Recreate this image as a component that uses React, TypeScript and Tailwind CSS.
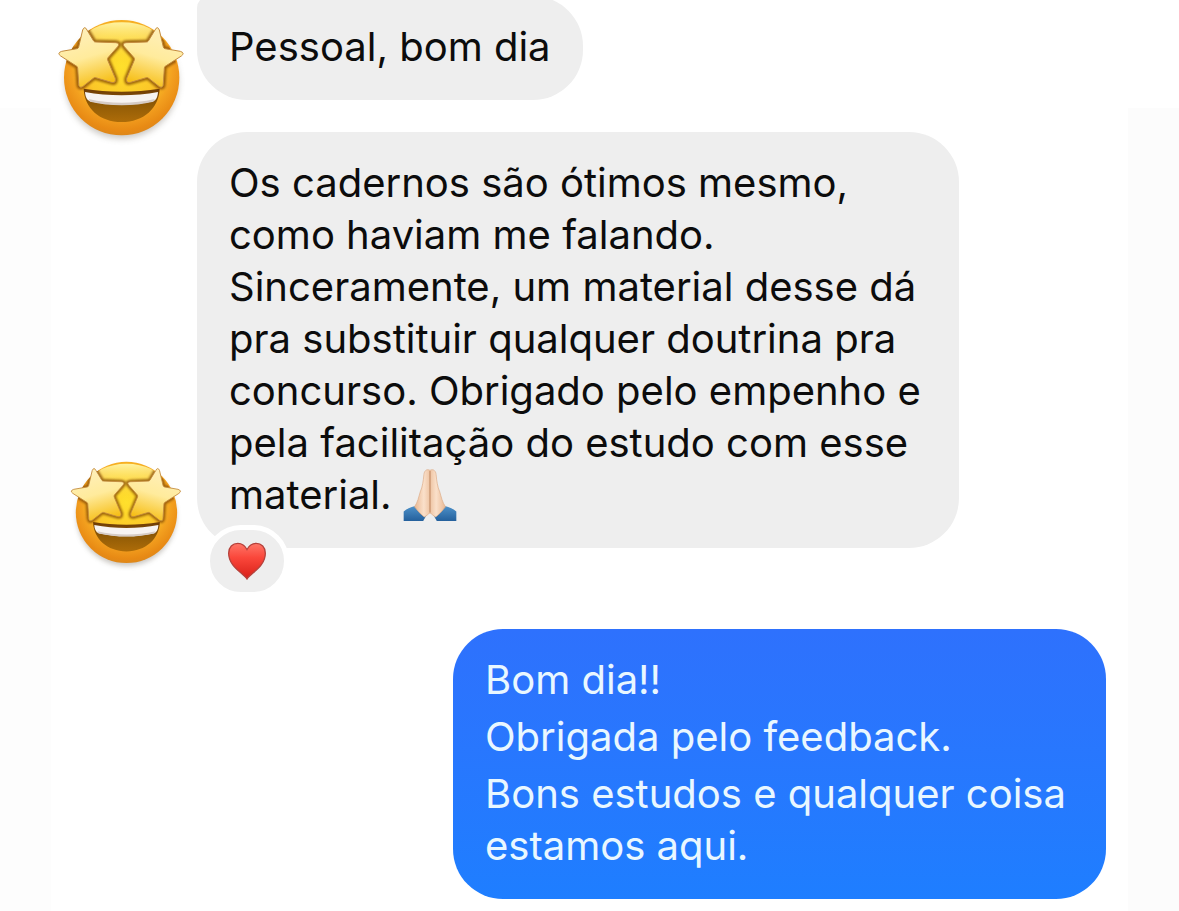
import type { ReactNode } from "react"
import { clsx } from "clsx"

const STAR =
  "M113 60 Q119 46 126 60 L146 93 Q148 96 152 96 L212 98 Q227 99 218 110 L189 143 Q187 146 188 150 L211 205 Q214 221 199 217 L152 203 Q148 202 145 205 L113 230 Q101 236 101 221 L98 174 Q98 170 94 168 L47 138 Q35 129 50 124 L96 116 Q100 115 101 111 Z"

function StarFace({ id, className }: { id: string; className?: string }) {
  return (
    <svg viewBox="0 0 450 420" role="img" aria-label="Foto do perfil" className={clsx("shrink-0", className)}>
      <defs>
        <radialGradient id={`${id}-face`} cx="0.5" cy="0.4" r="0.62">
          <stop offset="0" stopColor="#ffe02c" />
          <stop offset="0.5" stopColor="#fbc728" />
          <stop offset="0.72" stopColor="#f3a01f" />
          <stop offset="0.9" stopColor="#e88a14" />
          <stop offset="1" stopColor="#d9861c" />
        </radialGradient>
        <linearGradient id={`${id}-shine`} x1="0" y1="0" x2="0" y2="1">
          <stop offset="0" stopColor="#fff3a0" />
          <stop offset="1" stopColor="#ffdf3a" stopOpacity="0" />
        </linearGradient>
        <linearGradient id={`${id}-star`} x1="0.3" y1="0" x2="0.6" y2="1">
          <stop offset="0" stopColor="#fff0bd" />
          <stop offset="0.5" stopColor="#ffeb9c" />
          <stop offset="1" stopColor="#f6bd12" />
        </linearGradient>
        <linearGradient id={`${id}-mouth`} x1="0" y1="0" x2="0" y2="1">
          <stop offset="0" stopColor="#6d3a05" />
          <stop offset="0.5" stopColor="#925c06" />
          <stop offset="1" stopColor="#ad6c09" />
        </linearGradient>
        <filter id={`${id}-shadow`} x="-20%" y="-20%" width="140%" height="140%">
          <feGaussianBlur stdDeviation="9" />
        </filter>
        <filter id={`${id}-soft`} x="-20%" y="-20%" width="140%" height="140%">
          <feGaussianBlur stdDeviation="3" />
        </filter>
        <clipPath id={`${id}-clip`}>
          <circle cx="230" cy="203" r="173" />
        </clipPath>
      </defs>
      <circle cx="230" cy="216" r="170" fill="#8a8378" opacity="0.45" filter={`url(#${id}-shadow)`} />
      <circle cx="230" cy="203" r="173" fill={`url(#${id}-face)`} />
      <ellipse cx="230" cy="95" rx="116" ry="58" fill={`url(#${id}-shine)`} />
      <path
        d="M116 236 C190 248 270 248 344 236 C342 294 296 336 230 336 C164 336 118 294 116 236 Z"
        fill={`url(#${id}-mouth)`}
      />
      <path d="M120 246 C190 259 270 259 339 246 C338 262 333 271 325 274 C265 288 195 288 135 274 C126 271 121 260 120 246 Z" fill="#f7f3f1" />
      <path d="M131 267 C195 282 265 282 329 267 L325 275 C265 289 195 289 135 275 Z" fill="#d6ccc6" />
      <g clipPath={`url(#${id}-clip)`}>
        <path d={STAR} fill="none" stroke="#7d4206" strokeWidth="14" opacity="0.75" filter={`url(#${id}-soft)`} />
      </g>
      <path d={STAR} fill={`url(#${id}-star)`} stroke="#c48b3e" strokeWidth="3" />
      <g transform="translate(456 0) scale(-1 1)">
        <g clipPath={`url(#${id}-clip)`}>
          <path d={STAR} fill="none" stroke="#7d4206" strokeWidth="14" opacity="0.75" filter={`url(#${id}-soft)`} />
        </g>
        <path d={STAR} fill={`url(#${id}-star)`} stroke="#c48b3e" strokeWidth="3" />
      </g>
    </svg>
  )
}

function PrayingHands() {
  return (
    <svg viewBox="0 0 160 160" role="img" aria-label="Mãos em oração" className="-my-2 inline-block size-[54px] align-[-6px]">
      <defs>
        <linearGradient id="skin" x1="0" y1="0" x2="1" y2="0">
          <stop offset="0" stopColor="#e9b893" />
          <stop offset="0.3" stopColor="#fae0ca" />
          <stop offset="0.5" stopColor="#eec4a3" />
          <stop offset="0.7" stopColor="#fae0ca" />
          <stop offset="1" stopColor="#e9b893" />
        </linearGradient>
        <linearGradient id="sleeve" x1="0" y1="0" x2="0" y2="1">
          <stop offset="0" stopColor="#4f93cb" />
          <stop offset="1" stopColor="#24609c" />
        </linearGradient>
      </defs>
      <path d="M2 126 C14 116 30 109 46 108 L70 136 C66 144 62 149 60 154 L2 154 Z" fill="url(#sleeve)" />
      <path d="M158 126 C146 116 130 109 114 108 L90 136 C94 144 98 149 100 154 L158 154 Z" fill="url(#sleeve)" />
      <path
        d="M80 4 C90 -2 97 6 98 16 C100 36 102 52 109 68 C114 84 116 98 126 112 C116 124 106 136 97 142 C90 140 85 132 80 130 C75 132 70 140 63 142 C54 136 44 124 34 112 C44 98 46 84 51 68 C58 52 60 36 62 16 C63 6 70 -2 80 4 Z"
        fill="url(#skin)"
        stroke="#dcab86"
        strokeWidth="2"
      />
      <path d="M80 6 L80 129" stroke="#bd845e" strokeWidth="3" />
    </svg>
  )
}

function Heart() {
  return (
    <svg viewBox="0 0 120 116" aria-hidden="true" className="h-[38px] w-10">
      <defs>
        <linearGradient id="heart" x1="0" y1="0" x2="0" y2="1">
          <stop offset="0" stopColor="#ff7668" />
          <stop offset="0.4" stopColor="#fa473b" />
          <stop offset="1" stopColor="#d81f18" />
        </linearGradient>
      </defs>
      <path
        d="M60 113 C50 95 4 76 4 34 C4 16 16 4 32 4 C45 4 54 11 60 23 C66 11 75 4 88 4 C104 4 116 16 116 34 C116 76 70 95 60 113 Z"
        fill="url(#heart)"
        stroke="#b5423c"
        strokeWidth="4"
      />
    </svg>
  )
}

interface BubbleProps {
  className?: string
  children: ReactNode
}

function Bubble({ className, children }: BubbleProps) {
  return (
    <div className={clsx("relative px-8 pt-[25px] pb-[27px] text-[40px] leading-[52px]", className)}>
      {children}
    </div>
  )
}

export default function App() {
  return (
    <div className="flex min-h-screen overflow-hidden bg-white font-['Inter','Liberation_Sans',sans-serif]">
      <div className="mt-[108px] w-[51px] shrink-0 bg-[#fdfdfd]" />

      <main className="flex min-w-0 flex-1 flex-col pb-2">
        <div className="flex items-start">
          <div className="-mb-[50px] flex w-[146px] shrink-0 justify-end pt-[10px] pr-[2px]">
            <StarFace id="first" className="h-[140px] w-[150px]" />
          </div>
          <Bubble className="-mt-1 rounded-[50px] rounded-tl-xl bg-[#eeeeee] text-[#0c0c0c]">
            <p>Pessoal, bom dia</p>
          </Bubble>
        </div>

        <div className="mt-8 flex items-end">
          <div className="-mb-7 flex w-[146px] shrink-0 justify-end pr-[6px]">
            <StarFace id="second" className="h-[123px] w-[132px]" />
          </div>
          <Bubble className="w-full max-w-[762px] rounded-[50px] bg-[#eeeeee] text-[#0c0c0c]">
            <p>
              Os cadernos são ótimos mesmo, como haviam me falando. Sinceramente, um material desse dá
              pra substituir qualquer doutrina pra concurso. Obrigado pelo empenho e pela facilitação do
              estudo com esse material. <PrayingHands />
            </p>
            <button
              type="button"
              aria-label="Reação: coração"
              className="absolute -bottom-[49px] left-2 flex h-[72px] w-[84px] items-center justify-center rounded-full border-5 border-white bg-[#eeeeee]"
            >
              <Heart />
            </button>
          </Bubble>
        </div>

        <Bubble className="mt-[81px] mr-[22px] flex w-full max-w-[653px] flex-col gap-[5px] self-end rounded-[50px] bg-linear-to-b from-[#2e71fd] to-[#1e7eff] text-[#e9f7ff]">
          <p>Bom dia!!</p>
          <p>Obrigada pelo feedback.</p>
          <p>Bons estudos e qualquer coisa estamos aqui.</p>
        </Bubble>
      </main>

      <div className="mt-[108px] w-[51px] shrink-0 bg-[#fcfcfc]" />
    </div>
  )
}
